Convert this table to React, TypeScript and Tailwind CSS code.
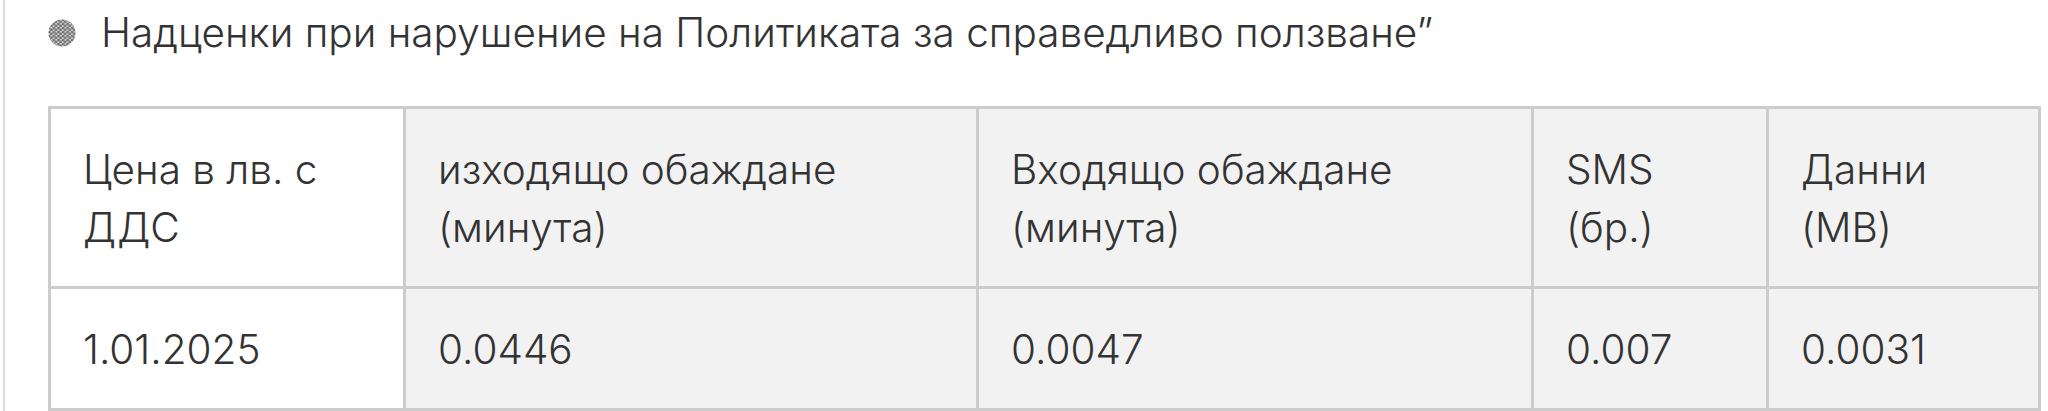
const HEADERS = [
  ['Цена в лв. с', 'ДДС'],
  ['изходящо обаждане', '(минута)'],
  ['Входящо обаждане', '(минута)'],
  ['SMS', '(бр.)'],
  ['Данни', '(MB)'],
]

const ROW = ['1.01.2025', '0.0446', '0.0047', '0.007', '0.0031']

const WIDTHS = ['w-[355px]', 'w-[573px]', 'w-[555px]', 'w-[235px]', 'w-[275px]']

function DotBullet() {
  return (
    <svg width="28" height="28" viewBox="0 0 28 28" className="shrink-0">
      <defs>
        <pattern id="dots" width="4.6" height="4" patternUnits="userSpaceOnUse">
          <circle cx="1.15" cy="1" r="1.45" fill="#707070" />
          <circle cx="3.45" cy="3" r="1.45" fill="#707070" />
        </pattern>
        <clipPath id="disc">
          <circle cx="14" cy="14" r="13.5" />
        </clipPath>
      </defs>
      <circle cx="14" cy="14" r="13.5" fill="#d4d4d4" />
      <rect width="28" height="28" fill="url(#dots)" clipPath="url(#disc)" />
    </svg>
  )
}

export default function App() {
  return (
    <div lang="bg" className="h-[411px] overflow-hidden bg-white pl-[3px] pr-[7px] font-light text-[#333333]" style={{ fontFamily: "Inter, 'Noto Sans', sans-serif" }}>
      <div className="h-full border-l-2 border-[#dddddd] pl-[43px]">
        <div className="flex items-center gap-[25px] pt-[5px] text-[40.5px] leading-[56px]">
          <DotBullet />
          <p>Надценки при нарушение на Политиката за справедливо ползване”</p>
        </div>

        <table className="mt-[45px] table-fixed border-separate border-spacing-0 text-[40.5px] leading-[58px]">
          <colgroup>
            {WIDTHS.map((w) => (
              <col key={w} className={w} />
            ))}
          </colgroup>
          <thead>
            <tr>
              {HEADERS.map(([a, b], i) => (
                <th
                  key={a}
                  className={`border-l-[3px] border-t-[3px] border-[#cccccc] px-[32px] pb-[29px] pt-[32px] text-left align-top font-light ${
                    i === 0 ? 'bg-white' : 'bg-[#f2f2f2]'
                  } ${i === 4 ? 'border-r-[3px]' : ''}`}
                >
                  {a}
                  <br />
                  {b}
                </th>
              ))}
            </tr>
          </thead>
          <tbody>
            <tr>
              {ROW.map((v, i) => (
                <td
                  key={i}
                  className={`border-b-[3px] border-l-[3px] border-t-[3px] border-[#cccccc] px-[32px] pb-[29px] pt-[32px] align-top ${
                    i === 0 ? 'bg-white' : 'bg-[#f2f2f2]'
                  } ${i === 4 ? 'border-r-[3px]' : ''}`}
                >
                  {v}
                </td>
              ))}
            </tr>
          </tbody>
        </table>
      </div>
    </div>
  )
}
